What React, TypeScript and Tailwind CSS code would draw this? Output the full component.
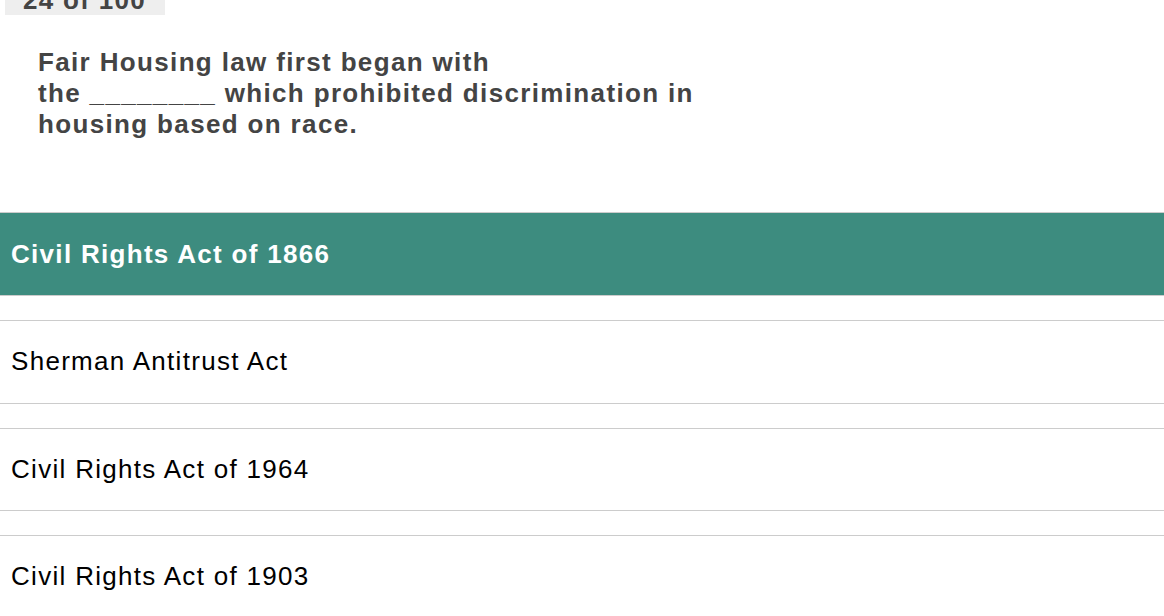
import React from "react";

const options = [
  { label: "Civil Rights Act of 1866", selected: true },
  { label: "Sherman Antitrust Act", selected: false },
  { label: "Civil Rights Act of 1964", selected: false },
  { label: "Civil Rights Act of 1903", selected: false },
];

export default function App() {
  return (
    <div
      className="flex h-[616px] w-full flex-col overflow-hidden bg-white"
      style={{ fontFamily: '"Liberation Sans", Arial, sans-serif' }}
    >
      <div className="ml-[5px] mt-[-12px] w-[160px] bg-[#eeeeee] pb-[3px] pl-[18px] text-[26px] font-bold leading-6 tracking-[1.3px] text-[#444444]">
        24 of 100
      </div>
      <div className="ml-[38px] mt-[32px] text-[26px] font-bold leading-[31px] tracking-[1.35px] text-[#444444]">
        Fair Housing law first began with
        <br />
        the ________ which prohibited discrimination in
        <br />
        housing based on race.
      </div>
      <div className="mt-[72px] flex flex-col gap-[24px]">
        {options.map((o) => (
          <div
            key={o.label}
            className={
              o.selected
                ? "flex h-[84px] shrink-0 items-center border-y border-[#cccccc] bg-[#3d8c7f] pl-[11px] text-[26px] font-bold tracking-[1.3px] text-white"
                : "flex h-[83.5px] shrink-0 items-center border-y border-[#cccccc] bg-white pl-[11px] text-[26px] tracking-[1.3px] text-black"
            }
          >
            {o.label}
          </div>
        ))}
      </div>
    </div>
  );
}
